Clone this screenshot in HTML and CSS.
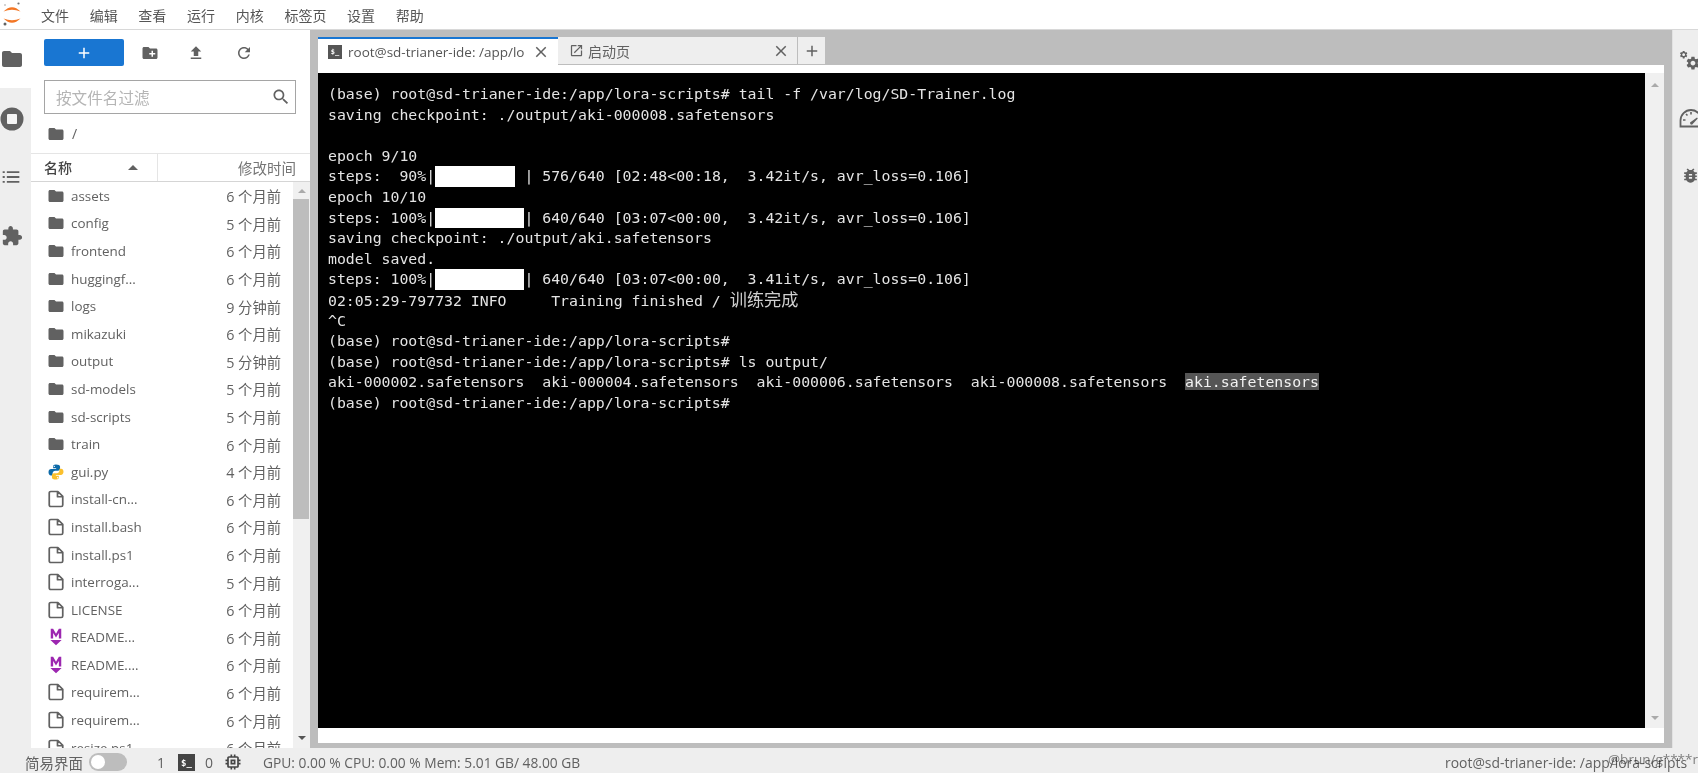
FILE: index.html
```html
<!DOCTYPE html>
<html lang="zh">
<head>
<meta charset="utf-8">
<title>JupyterLab</title>
<link rel="stylesheet" href="styles.css">
</head>
<body>
<svg class="sprite" xmlns="http://www.w3.org/2000/svg">
  <symbol id="i-folder" viewBox="0 0 24 24"><path d="M10 4H4c-1.100 0-2 .9-2 2v12c0 1.100.9 2 2 2h16c1.100 0 2-.9 2-2V8c0-1.100-.9-2-2-2h-8l-2-2z"/></symbol>
  <symbol id="i-file" viewBox="0 0 24 24"><path fill="none" stroke="currentColor" stroke-width="2.300" stroke-linejoin="round" d="M3 4a2 2 0 0 1 2-2h9.500L21 8.500V20a2 2 0 0 1-2 2H5a2 2 0 0 1-2-2zM14 2.500V9h6.500"/></symbol>
  <symbol id="i-py" viewBox="0 0 24 24"><path fill="#0d6aa8" d="M11.900 2C8.400 2 8.200 3.500 8.200 4.600V7h4v1H5.500C3.500 8 2 9.600 2 12.300c0 2.700 1.300 4.200 3.200 4.200H7.500v-2.700c0-1.900 1.600-3.400 3.400-3.400h3.800c1.500 0 2.700-1.200 2.700-2.700V4.700C17.400 3 15.500 2 11.900 2zM9.800 3.500a.9.9 0 1 1 0 1.800.9.9 0 0 1 0-1.800z"/><path fill="#fbc02d" d="M12.100 22c3.500 0 3.700-1.500 3.700-2.600V17h-4v-1h6.700c2 0 3.500-1.600 3.500-4.300 0-2.700-1.300-4.200-3.200-4.200h-2.300v2.700c0 1.900-1.600 3.400-3.400 3.400H9.300c-1.500 0-2.700 1.200-2.700 2.700v2.900C6.600 21 8.500 22 12.100 22zm2.100-1.500a.9.9 0 1 1 0-1.800.9.9 0 0 1 0 1.800z"/></symbol>
  <symbol id="i-md" viewBox="0 0 24 24"><path fill="#9c27b0" d="M5 1h3.200L12 7.500 15.800 1H19v13h-3.200V6.800L12 12.800 8.200 6.800V14H5zM4.500 16h15L12 23z"/></symbol>
  <symbol id="i-newfolder" viewBox="0 0 24 24"><path d="M20 6h-8l-2-2H4c-1.110 0-1.990.89-1.990 2L2 18c0 1.110.89 2 2 2h16c1.110 0 2-.89 2-2V8c0-1.110-.89-2-2-2zm-1 8h-3v3h-2v-3h-3v-2h3V9h2v3h3v2z"/></symbol>
  <symbol id="i-upload" viewBox="0 0 24 24"><path d="M9 16h6v-6h4l-7-7-7 7h4v6zm-4 2h14v2H5v-2z"/></symbol>
  <symbol id="i-refresh" viewBox="0 0 24 24"><path d="M17.650 6.350C16.200 4.900 14.210 4 12 4c-4.420 0-7.990 3.580-7.990 8s3.570 8 7.990 8c3.730 0 6.840-2.550 7.730-6h-2.080c-.82 2.330-3.040 4-5.650 4-3.310 0-6-2.690-6-6s2.690-6 6-6c1.660 0 3.140.69 4.220 1.780L13 11h7V4l-2.350 2.350z"/></symbol>
  <symbol id="i-search" viewBox="0 0 24 24"><path d="M15.500 14h-.79l-.28-.27C15.410 12.590 16 11.110 16 9.500 16 5.910 13.090 3 9.500 3S3 5.910 3 9.500 5.910 16 9.500 16c1.610 0 3.090-.59 4.230-1.570l.27.28v.79l5 4.990L20.490 19l-4.990-5zm-6 0C7.010 14 5 11.990 5 9.500S7.010 5 9.500 5 14 7.010 14 9.500 11.990 14 9.500 14z"/></symbol>
  <symbol id="i-running" viewBox="0 0 24 24"><circle cx="12" cy="12" r="11.500"/><rect x="7" y="7" width="10" height="10" rx="1" fill="#f4f4f4"/></symbol>
  <symbol id="i-list" viewBox="0 0 24 24"><path d="M2 5h2.500v2.200H2zM7 5h15v2.200H7zM2 10.900h2.500v2.200H2zM7 10.900h15v2.200H7zM2 16.800h2.500V19H2zM7 16.800h15V19H7z"/></symbol>
  <symbol id="i-ext" viewBox="0 0 24 24"><path d="M20.500 11H19V7c0-1.100-.9-2-2-2h-4V3.500C13 2.120 11.880 1 10.500 1S8 2.120 8 3.500V5H4c-1.100 0-1.990.9-1.990 2v3.800H3.500c1.490 0 2.700 1.210 2.700 2.700s-1.210 2.700-2.700 2.700H2V20c0 1.100.9 2 2 2h3.800v-1.500c0-1.490 1.210-2.700 2.700-2.700 1.490 0 2.700 1.210 2.700 2.700V22H17c1.100 0 2-.9 2-2v-4h1.500c1.380 0 2.500-1.120 2.500-2.500S21.880 11 20.500 11z"/></symbol>
  <symbol id="i-chip" viewBox="0 0 24 24"><path d="M15 9H9v6h6V9zm-2 4h-2v-2h2v2zm8-2V9h-2V7c0-1.100-.9-2-2-2h-2V3h-2v2h-2V3H9v2H7c-1.100 0-2 .9-2 2v2H3v2h2v2H3v2h2v2c0 1.100.9 2 2 2h2v2h2v-2h2v2h2v-2h2c1.100 0 2-.9 2-2v-2h2v-2h-2v-2h2zm-4 6H7V7h10v10z"/></symbol>
  <symbol id="i-launch" viewBox="0 0 24 24"><path d="M19 19H5V5h7V3H5c-1.110 0-2 .9-2 2v14c0 1.100.89 2 2 2h14c1.100 0 2-.9 2-2v-7h-2v7zM14 3v2h3.590l-9.830 9.830 1.410 1.410L19 6.410V10h2V3h-7z"/></symbol>
  <symbol id="i-close" viewBox="0 0 24 24"><path d="M19 6.410 17.590 5 12 10.590 6.410 5 5 6.410 10.590 12 5 17.590 6.410 19 12 13.410 17.590 19 19 17.590 13.410 12z"/></symbol>
  <symbol id="i-plus" viewBox="0 0 24 24"><path d="M19 13h-6v6h-2v-6H5v-2h6V5h2v6h6v2z"/></symbol>
  <symbol id="i-bug" viewBox="0 0 24 24"><path d="M20 8h-2.810c-.45-.78-1.070-1.450-1.820-1.960L17 4.410 15.590 3l-2.170 2.170C12.960 5.060 12.490 5 12 5c-.49 0-.96.06-1.410.17L8.410 3 7 4.410l1.620 1.630C7.880 6.550 7.260 7.220 6.810 8H4v2h2.090c-.05.33-.09.66-.09 1v1H4v2h2v1c0 .34.04.67.09 1H4v2h2.810c1.040 1.790 2.970 3 5.190 3s4.150-1.210 5.190-3H20v-2h-2.090c.05-.33.09-.66.09-1v-1h2v-2h-2v-1c0-.34-.04-.67-.09-1H20V8zm-6 8h-4v-2h4v2zm0-4h-4v-2h4v2z"/></symbol>
  <symbol id="i-gear" viewBox="0 0 24 24"><path d="M19.140 12.940c.04-.3.06-.61.06-.94 0-.32-.02-.64-.07-.94l2.030-1.580c.18-.14.23-.41.12-.61l-1.920-3.320c-.12-.22-.37-.29-.59-.22l-2.390.96c-.5-.38-1.030-.7-1.620-.94l-.36-2.540c-.04-.24-.24-.41-.48-.41h-3.840c-.24 0-.43.17-.47.41l-.36 2.540c-.59.24-1.130.57-1.620.94l-2.390-.96c-.22-.08-.47 0-.59.22L2.740 8.870c-.12.21-.08.47.12.61l2.030 1.580c-.05.3-.09.63-.09.94s.02.64.07.94l-2.030 1.580c-.18.14-.23.41-.12.61l1.920 3.320c.12.22.37.29.59.22l2.390-.96c.5.38 1.030.7 1.620.94l.36 2.540c.05.24.24.41.48.41h3.840c.24 0 .44-.17.47-.41l.36-2.540c.59-.24 1.130-.56 1.620-.94l2.390.96c.22.08.47 0 .59-.22l1.920-3.320c.12-.22.07-.47-.12-.61l-2.010-1.580zM12 15.600c-1.980 0-3.600-1.620-3.600-3.600s1.620-3.600 3.600-3.600 3.600 1.620 3.600 3.600-1.620 3.600-3.600 3.600z"/></symbol>
</svg>

<header class="menubar">
  <svg class="logo" viewBox="0 0 24 29" xmlns="http://www.w3.org/2000/svg">
    <path fill="#f37726" d="M3.500 11.500Q12 3 20.500 11.500 12 8 3.500 11.500zM3.500 18.500Q12 27 20.500 18.500 12 22 3.500 18.500z"/>
    <circle cx="18.500" cy="3.500" r="1.100" fill="#767677"/><circle cx="5" cy="24" r="1.500" fill="#616262"/><circle cx="5" cy="5" r=".8" fill="#9e9e9e"/>
  </svg>
  <nav class="menu">
    <span class="menu-item">文件</span><span class="menu-item">编辑</span><span class="menu-item">查看</span><span class="menu-item">运行</span><span class="menu-item">内核</span><span class="menu-item">标签页</span><span class="menu-item">设置</span><span class="menu-item">帮助</span>
  </nav>
</header>

<main class="shell">
  <aside class="activity">
    <div class="activity-item active"><svg class="ico-24"><use href="#i-folder"/></svg></div>
    <div class="activity-item item-running"><svg class="ico-24"><use href="#i-running"/></svg></div>
    <div class="activity-item"><svg class="ico-20"><use href="#i-list"/></svg></div>
    <div class="activity-item"><svg class="ico-22"><use href="#i-ext"/></svg></div>
  </aside>

  <section class="browser">
    <div class="toolbar">
      <button class="new-btn"><svg class="ico-18 white"><use href="#i-plus"/></svg></button>
      <svg class="tool ico-18"><use href="#i-newfolder"/></svg>
      <svg class="tool ico-18"><use href="#i-upload"/></svg>
      <svg class="tool tool-last ico-18"><use href="#i-refresh"/></svg>
    </div>
    <div class="filter"><span class="filter-text">按文件名过滤</span><svg class="ico-20"><use href="#i-search"/></svg></div>
    <div class="crumbs"><svg class="ico-18"><use href="#i-folder"/></svg><span class="slash">/</span></div>
    <div class="list-head">
      <div class="head-name"><span>名称</span><span class="caret-up"></span></div>
      <div class="head-time">修改时间</div>
    </div>
    <div class="list-wrap">
      <ul class="files">
        <li class="row"><svg class="ico-18"><use href="#i-folder"/></svg><span class="fname">assets</span><span class="ftime">6 个月前</span></li>
        <li class="row"><svg class="ico-18"><use href="#i-folder"/></svg><span class="fname">config</span><span class="ftime">5 个月前</span></li>
        <li class="row"><svg class="ico-18"><use href="#i-folder"/></svg><span class="fname">frontend</span><span class="ftime">6 个月前</span></li>
        <li class="row"><svg class="ico-18"><use href="#i-folder"/></svg><span class="fname">huggingf...</span><span class="ftime">6 个月前</span></li>
        <li class="row"><svg class="ico-18"><use href="#i-folder"/></svg><span class="fname">logs</span><span class="ftime">9 分钟前</span></li>
        <li class="row"><svg class="ico-18"><use href="#i-folder"/></svg><span class="fname">mikazuki</span><span class="ftime">6 个月前</span></li>
        <li class="row"><svg class="ico-18"><use href="#i-folder"/></svg><span class="fname">output</span><span class="ftime">5 分钟前</span></li>
        <li class="row"><svg class="ico-18"><use href="#i-folder"/></svg><span class="fname">sd-models</span><span class="ftime">5 个月前</span></li>
        <li class="row"><svg class="ico-18"><use href="#i-folder"/></svg><span class="fname">sd-scripts</span><span class="ftime">5 个月前</span></li>
        <li class="row"><svg class="ico-18"><use href="#i-folder"/></svg><span class="fname">train</span><span class="ftime">6 个月前</span></li>
        <li class="row"><svg class="ico-18"><use href="#i-py"/></svg><span class="fname">gui.py</span><span class="ftime">4 个月前</span></li>
        <li class="row"><svg class="ico-18"><use href="#i-file"/></svg><span class="fname">install-cn...</span><span class="ftime">6 个月前</span></li>
        <li class="row"><svg class="ico-18"><use href="#i-file"/></svg><span class="fname">install.bash</span><span class="ftime">6 个月前</span></li>
        <li class="row"><svg class="ico-18"><use href="#i-file"/></svg><span class="fname">install.ps1</span><span class="ftime">6 个月前</span></li>
        <li class="row"><svg class="ico-18"><use href="#i-file"/></svg><span class="fname">interroga...</span><span class="ftime">5 个月前</span></li>
        <li class="row"><svg class="ico-18"><use href="#i-file"/></svg><span class="fname">LICENSE</span><span class="ftime">6 个月前</span></li>
        <li class="row"><svg class="ico-18"><use href="#i-md"/></svg><span class="fname">README...</span><span class="ftime">6 个月前</span></li>
        <li class="row"><svg class="ico-18"><use href="#i-md"/></svg><span class="fname">README....</span><span class="ftime">6 个月前</span></li>
        <li class="row"><svg class="ico-18"><use href="#i-file"/></svg><span class="fname">requirem...</span><span class="ftime">6 个月前</span></li>
        <li class="row"><svg class="ico-18"><use href="#i-file"/></svg><span class="fname">requirem...</span><span class="ftime">6 个月前</span></li>
        <li class="row"><svg class="ico-18"><use href="#i-file"/></svg><span class="fname">resize.ps1</span><span class="ftime">6 个月前</span></li>
      </ul>
      <div class="list-scroll">
        <span class="arrow-up"></span>
        <span class="list-thumb"></span>
        <span class="arrow-down"></span>
      </div>
    </div>
  </section>

  <section class="dock">
    <div class="tabbar">
      <div class="tab tab-active">
        <span class="term-icon">$_</span>
        <span class="tab-title">root@sd-trianer-ide: /app/lo</span>
        <svg class="ico-18"><use href="#i-close"/></svg>
      </div>
      <div class="tab tab-launcher">
        <svg class="ico-15"><use href="#i-launch"/></svg>
        <span class="tab-title">启动页</span>
        <svg class="ico-18"><use href="#i-close"/></svg>
      </div>
      <div class="tab tab-add"><svg class="ico-18"><use href="#i-plus"/></svg></div>
    </div>
    <div class="pane">
      <div class="terminal">
        <div class="ln">(base) root@sd-trianer-ide:/app/lora-scripts# tail -f /var/log/SD-Trainer.log</div>
        <div class="ln">saving checkpoint: ./output/aki-000008.safetensors</div>
        <div class="ln"> </div>
        <div class="ln">epoch 9/10</div>
        <div class="ln">steps:  90%|<span class="bar9"></span> | 576/640 [02:48&lt;00:18,  3.42it/s, avr_loss=0.106]</div>
        <div class="ln">epoch 10/10</div>
        <div class="ln">steps: 100%|<span class="bar10"></span>| 640/640 [03:07&lt;00:00,  3.42it/s, avr_loss=0.106]</div>
        <div class="ln">saving checkpoint: ./output/aki.safetensors</div>
        <div class="ln">model saved.</div>
        <div class="ln">steps: 100%|<span class="bar10"></span>| 640/640 [03:07&lt;00:00,  3.41it/s, avr_loss=0.106]</div>
        <div class="ln">02:05:29-797732 INFO     Training finished / <span class="cjk">训练完成</span></div>
        <div class="ln">^C</div>
        <div class="ln">(base) root@sd-trianer-ide:/app/lora-scripts#</div>
        <div class="ln">(base) root@sd-trianer-ide:/app/lora-scripts# ls output/</div>
        <div class="ln">aki-000002.safetensors  aki-000004.safetensors  aki-000006.safetensors  aki-000008.safetensors  <span class="hl">aki.safetensors</span></div>
        <div class="ln">(base) root@sd-trianer-ide:/app/lora-scripts#</div>
      </div>
      <div class="term-scroll"><span class="arrow-up"></span><span class="arrow-down"></span></div>
    </div>
  </section>

  <aside class="rightbar">
    <svg class="gears" viewBox="0 0 26 26"><use href="#i-gear" x="0" y="0" width="11" height="11"/><use href="#i-gear" x="7" y="6" width="19" height="19"/></svg>
    <svg class="gauge" viewBox="0 0 24 22"><path fill="none" stroke="currentColor" stroke-width="1.800" d="M1.500 20.500v-6a10.500 10.500 0 0 1 21 0v6z"/><path fill="currentColor" d="M11 16.500l7-5 .8 1-5.800 6.200a2 2 0 0 1-2-2.200z"/><path stroke="currentColor" stroke-width="1.600" d="M4 14h2.500M7 8l1.500 1.500M12 6v2.500"/></svg>
    <svg class="bug"><use href="#i-bug"/></svg>
  </aside>
</main>

<footer class="status">
  <span class="simple">简易界面</span>
  <span class="toggle"><span class="knob"></span></span>
  <span class="count-a">1</span>
  <span class="term-icon term-icon-lg">$_</span>
  <span class="count-b">0</span>
  <svg class="chip"><use href="#i-chip"/></svg>
  <span class="metrics">GPU: 0.00 % CPU: 0.00 % Mem: 5.01 GB/ 48.00 GB</span>
  <span class="path">root@sd-trianer-ide: /app/lora-scripts</span>
</footer>
<span class="watermark">@brun/g****r</span>
</body>
</html>
```
FILE: styles.css
```css
* { box-sizing: border-box; }
html, body { margin: 0; height: 100%; }
body {
  position: relative;
  width: 1698px;
  height: 773px;
  overflow: hidden;
  background: #fff;
  color: #616161;
  font-family: "Open Sans", "Noto Sans CJK SC", sans-serif;
  font-size: 13px;
}
.sprite { display: none; }
svg { fill: currentColor; flex: none; display: block; }
.ico-15 { width: 15px; height: 15px; }
.ico-18 { width: 18px; height: 18px; }
.ico-20 { width: 20px; height: 20px; }
.ico-22 { width: 22px; height: 22px; }
.ico-24 { width: 24px; height: 24px; }
.white { color: #fff; }

/* menu */
.menubar {
  height: 30px;
  display: flex;
  align-items: center;
  border-bottom: 1px solid #d8d8d8;
}
.logo { width: 24px; height: 29px; }
.menu { display: flex; margin-left: 6.650px; }
.menu-item {
  padding: 0 10.350px;
  font-family: "Noto Sans CJK SC", sans-serif;
  font-size: 14px;
  color: #555;
  line-height: 20px;
}

/* frame */
.shell { display: flex; height: 718px; }
.activity { width: 31px; background: #eee; display: flex; flex-direction: column; }
.activity-item { height: 59px; display: flex; align-items: center; padding-left: 1px; color: #616161; }
.activity-item.active { height: 58px; background: #fff; padding-left: 0; }
.item-running { padding-top: 3px; padding-left: 0; }

/* file browser */
.browser { width: 279px; background: #fff; display: flex; flex-direction: column; }
.toolbar { display: flex; align-items: center; height: 27px; margin: 9px 0 0 13px; }
.new-btn {
  width: 80px; height: 27px;
  border: 0; border-radius: 2px;
  background: #1976d2;
  display: flex; align-items: center; justify-content: center;
  padding: 0;
}
.tool { margin-left: 17px; }
.tool + .tool { margin-left: 28px; color: #616161; }
.tool + .tool-last { margin-left: 30px; }
.filter {
  margin: 14px 14px 0 13px;
  height: 34px;
  border: 1px solid #a5a5a5;
  display: flex; align-items: center; justify-content: space-between;
  padding: 0 4px 0 11px;
}
.filter-text { font-family: "Noto Sans CJK SC", sans-serif; font-size: 15.600px; color: #b5b5b5; }
.crumbs { display: flex; align-items: center; height: 39px; padding-left: 16px; }
.slash { margin-left: 7px; font-size: 14px; }
.list-head {
  display: flex;
  height: 29px;
  border-top: 1px solid #e5e5e5;
  border-bottom: 1px solid #d5d5d5;
  font-family: "Noto Sans CJK SC", sans-serif;
  font-size: 14px;
  line-height: 27px;
}
.head-name {
  width: 127px;
  padding-left: 13px;
  border-right: 1px solid #e5e5e5;
  display: flex; align-items: center; justify-content: space-between;
  padding-right: 19px;
  font-weight: 500;
  color: #444;
}
.caret-up { width: 0; height: 0; border: 5px solid transparent; border-top: 0; border-bottom: 5px solid #616161; }
.head-time { flex: 1; text-align: right; padding-right: 14px; color: #757575; font-size: 14.500px; }
.list-wrap { flex: 1; min-height: 0; display: flex; overflow: hidden; }
.files { list-style: none; margin: 0; padding: 0; width: 262px; overflow: hidden; }
.row { height: 27.600px; display: flex; align-items: center; padding-left: 16px; padding-right: 12px; }
.fname { margin-left: 6px; flex: 1; font-size: 13.400px; color: #616161; white-space: nowrap; }
.ftime { font-size: 14.300px; color: #616161; white-space: nowrap; }
.list-scroll {
  width: 17px; background: #f0f0f0;
  display: flex; flex-direction: column; align-items: center;
}
.list-scroll .arrow-up { margin-top: 7px; }
.list-thumb { width: 16px; height: 320px; background: #bdbdbd; margin-top: 6px; flex: none; margin-right: 1px; }
.list-scroll .arrow-down { margin-top: auto; margin-bottom: 8px; border-top-color: #555; }
.arrow-up { width: 0; height: 0; border: 4px solid transparent; border-top: 0; border-bottom: 4px solid #aaa; }
.arrow-down { width: 0; height: 0; border: 4px solid transparent; border-bottom: 0; border-top: 4px solid #aaa; }

/* dock */
.dock {
  flex: 1; min-width: 0;
  background: #bdbdbd;
  padding: 7px 8px 5px;
  display: flex; flex-direction: column;
}
.tabbar { display: flex; height: 28px; flex: none; align-items: flex-start; font-size: 13.500px; }
.tab { display: flex; align-items: center; height: 27px; background: #eee; margin-right: 1px; }
.tab-active {
  width: 240px; height: 28px;
  background: #fff;
  border-top: 2px solid #1976d2;
  padding-left: 10px;
  margin-right: 0;
}
.tab-active .tab-title { width: 183px; margin-left: 6px; overflow: hidden; white-space: nowrap; color: #555; }
.tab-active .ico-18 { margin-left: 1px; }
.tab-launcher { width: 239px; padding-left: 11px; }
.tab-launcher .tab-title { flex: 1; margin-left: 4px; font-family: "Noto Sans CJK SC", sans-serif; font-size: 14px; }
.tab-launcher .ico-18 { margin-right: 7px; }
.tab-add { width: 27px; justify-content: center; }
.term-icon {
  width: 14px; height: 14px; flex: none;
  background: #555;
  color: #fff;
  font-family: "DejaVu Sans Mono", monospace;
  font-size: 7px; font-weight: 700;
  line-height: 14px;
  text-align: center;
}
.pane {
  flex: 1; min-height: 0;
  background: #fff;
  padding: 8px 0 15px;
  display: flex;
}
.terminal {
  flex: 1; min-width: 0;
  background: #000;
  padding: 11px 0 0 10px;
  overflow: hidden;
  color: #e4e4e4;
  font-family: "DejaVu Sans Mono", "Noto Sans CJK SC", monospace;
  font-size: 14.830px;
  line-height: 20.600px;
}
.ln { height: 20.600px; white-space: pre; }
.cjk { font-size: 17.200px; line-height: 20px; color: #cfcfcf; }
.bar9, .bar10 { display: inline-block; height: 20.600px; background: #fff; vertical-align: top; }
.bar9 { width: 9ch; }
.bar10 { width: 10ch; }
.hl { background: #555; color: #f2f2f2; }
.term-scroll {
  width: 19px; background: #f0f0f0;
  display: flex; flex-direction: column; align-items: center; justify-content: space-between;
  padding: 10px 0 8px;
}

/* right bar */
.rightbar {
  width: 26px; background: #eee;
  border-left: 1px solid #e2e2e2;
  display: flex; flex-direction: column;
  padding: 20px 0 0 6px;
  overflow: hidden;
  color: #616161;
}
.gears { width: 22px; height: 22px; }
.gauge { width: 24px; height: 22px; margin-top: 34px; margin-left: 0; }
.bug { width: 19px; height: 19px; margin-top: 38px; margin-left: 2px; }

/* status */
.status {
  height: 25px;
  background: #eee;
  display: flex; align-items: center;
  padding: 3px 11px 0 25px;
  font-size: 13px;
  color: #616161;
}
.simple { font-family: "Noto Sans CJK SC", sans-serif; font-size: 14.500px; }
.toggle { width: 38px; height: 18px; border-radius: 9px; background: #bdbdbd; margin-left: 6px; padding: 2px; }
.knob { display: block; width: 14px; height: 14px; border-radius: 50%; background: #fff; }
.count-a { margin-left: 30px; font-size: 14px; }
.term-icon-lg { width: 17px; height: 17px; line-height: 18px; font-size: 9px; margin-left: 13px; background: #444; }
.count-b { margin-left: 10px; font-size: 14px; }
.chip { width: 20px; height: 20px; margin-left: 10px; color: #444; }
.metrics { margin-left: 20px; font-size: 13.770px; }
.path { margin-left: auto; font-size: 13.900px; }
.watermark {
  position: absolute;
  right: 0; bottom: 5px;
  font-size: 13.500px;
  color: #888;
  mix-blend-mode: multiply;
}
```
